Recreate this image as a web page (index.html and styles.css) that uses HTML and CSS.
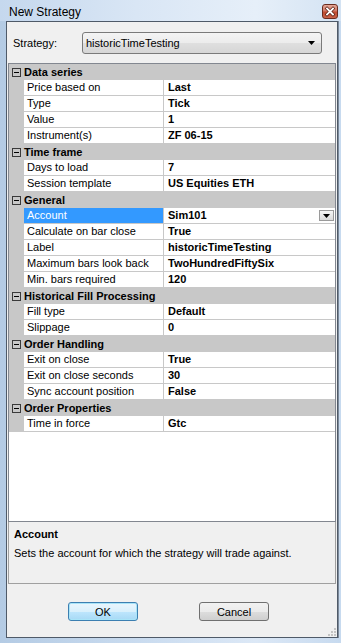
FILE: index.html
```html
<!DOCTYPE html>
<html>
<head>
<meta charset="utf-8">
<link rel="stylesheet" href="styles.css">
</head>
<body>
<div class="window">
  <div class="titlebar">
    <span class="title">New Strategy</span>
    <span class="close"><svg width="14" height="13" viewBox="0 0 14 13"><path d="M4 3.5 L10 9.5 M10 3.5 L4 9.5" stroke="#5a1e12" stroke-width="3.2" stroke-linecap="square"/><path d="M4 3.5 L10 9.5 M10 3.5 L4 9.5" stroke="#ffffff" stroke-width="1.8" stroke-linecap="square"/></svg></span>
  </div>
  <div class="client">
    <div class="strategy-row">
      <span class="strategy-label">Strategy:</span>
      <div class="combo">
        <span class="combo-text">historicTimeTesting</span>
        <svg class="combo-arrow" width="7" height="4" viewBox="0 0 7 4"><path d="M0 0 H7 L3.5 4 Z" fill="#000"/></svg>
      </div>
    </div>
    <div class="grid">
      <div class="cat"><span class="minus"></span><span class="cat-name">Data series</span></div>
      <div class="prop"><span class="name">Price based on</span><span class="val">Last</span></div>
      <div class="prop"><span class="name">Type</span><span class="val">Tick</span></div>
      <div class="prop"><span class="name">Value</span><span class="val">1</span></div>
      <div class="prop"><span class="name">Instrument(s)</span><span class="val">ZF 06-15</span></div>
      <div class="cat"><span class="minus"></span><span class="cat-name">Time frame</span></div>
      <div class="prop"><span class="name">Days to load</span><span class="val">7</span></div>
      <div class="prop"><span class="name">Session template</span><span class="val">US Equities ETH</span></div>
      <div class="cat"><span class="minus"></span><span class="cat-name">General</span></div>
      <div class="prop selected"><span class="name">Account</span><span class="val">Sim101<span class="dd"><svg width="7" height="4" viewBox="0 0 7 4"><path d="M0 0 H7 L3.5 4 Z" fill="#000"/></svg></span></span></div>
      <div class="prop"><span class="name">Calculate on bar close</span><span class="val">True</span></div>
      <div class="prop"><span class="name">Label</span><span class="val">historicTimeTesting</span></div>
      <div class="prop"><span class="name">Maximum bars look back</span><span class="val">TwoHundredFiftySix</span></div>
      <div class="prop"><span class="name">Min. bars required</span><span class="val">120</span></div>
      <div class="cat"><span class="minus"></span><span class="cat-name">Historical Fill Processing</span></div>
      <div class="prop"><span class="name">Fill type</span><span class="val">Default</span></div>
      <div class="prop"><span class="name">Slippage</span><span class="val">0</span></div>
      <div class="cat"><span class="minus"></span><span class="cat-name">Order Handling</span></div>
      <div class="prop"><span class="name">Exit on close</span><span class="val">True</span></div>
      <div class="prop"><span class="name">Exit on close seconds</span><span class="val">30</span></div>
      <div class="prop"><span class="name">Sync account position</span><span class="val">False</span></div>
      <div class="cat"><span class="minus"></span><span class="cat-name">Order Properties</span></div>
      <div class="prop"><span class="name">Time in force</span><span class="val">Gtc</span></div>
      <div class="filler"></div>
    </div>
    <div class="desc">
      <div class="desc-title">Account</div>
      <div class="desc-text">Sets the account for which the strategy will trade against.</div>
    </div>
    <div class="buttons">
      <button class="btn default">OK</button>
      <button class="btn">Cancel</button>
    </div>
    <svg class="grip" width="10" height="10" viewBox="0 0 10 10">
      <rect x="8" y="2" width="2" height="2" fill="#c4c4c4"/>
      <rect x="5" y="5" width="2" height="2" fill="#c4c4c4"/>
      <rect x="8" y="5" width="2" height="2" fill="#c4c4c4"/>
      <rect x="2" y="8" width="2" height="2" fill="#c4c4c4"/>
      <rect x="5" y="8" width="2" height="2" fill="#c4c4c4"/>
      <rect x="8" y="8" width="2" height="2" fill="#c4c4c4"/>
    </svg>
  </div>
</div>
</body>
</html>
```
FILE: styles.css
```css
* { box-sizing: border-box; }
html, body { margin: 0; padding: 0; }
body {
  width: 341px;
  height: 643px;
  overflow: hidden;
  font-family: "Liberation Sans", Arial, sans-serif;
  font-size: 11px;
  color: #000;
}
.window {
  width: 341px;
  height: 643px;
  display: flex;
  flex-direction: column;
  background: linear-gradient(90deg, #b4cbe4 0%, #c9dbef 40%, #dce8f6 75%, #c7daef 100%);
}
.titlebar {
  height: 21px;
  display: flex;
  justify-content: space-between;
  align-items: flex-start;
  padding: 0 3px 0 9px;
  background: linear-gradient(90deg, #c5d8ee 0%, #d9e6f5 40%, #e6eff9 75%, #d4e3f3 100%);
}
.title {
  font-family: "Liberation Sans", Arial, sans-serif;
  font-size: 12px;
  line-height: 15px;
  margin-top: 5px;
  color: #000;
}
.close {
  width: 16px;
  height: 15px;
  margin-top: 4px;
  border: 1px solid #6b2b1e;
  border-radius: 3px;
  background: linear-gradient(#e5a898 0%, #d27966 45%, #c04b30 55%, #c9634a 100%);
  display: flex;
  align-items: center;
  justify-content: center;
}
.client {
  position: relative;
  flex: 1;
  margin: 0 3px 5px 6px;
  border: 1px solid #4f5a68;
  box-shadow: 1px 0 0 #7d8a9a;
  background: #f0f0f0;
  display: flex;
  flex-direction: column;
}
.strategy-row {
  display: flex;
  align-items: center;
  height: 22px;
  margin-top: 10px;
  padding-left: 6px;
}
.strategy-label {
  width: 69px;
  color: #000;
}
.combo {
  width: 240px;
  height: 22px;
  border: 1px solid #7a7a7a;
  border-radius: 3px;
  background: linear-gradient(#f4f4f4 0%, #ececec 50%, #dfdfdf 51%, #d6d6d6 100%);
  display: flex;
  align-items: center;
  justify-content: space-between;
  padding: 0 6px 0 3px;
}
.combo-text { color: #000; }
.combo-arrow { display: block; }
.grid {
  margin: 9px 1px 0 1px;
  height: 459px;
  border: 1px solid #828790;
  background: #fff;
  display: flex;
  flex-direction: column;
}
.cat {
  height: 16px;
  flex: none;
  background: #c8c8c8;
  display: flex;
  align-items: center;
}
.minus {
  position: relative;
  width: 9px;
  height: 9px;
  margin: 0 3px 0 3px;
  border: 1px solid #3a3a3a;
}
.minus::after {
  content: "";
  position: absolute;
  left: 1px;
  top: 3px;
  width: 5px;
  height: 1px;
  background: #000;
}
.cat-name {
  font-weight: bold;
  line-height: 15px;
}
.prop {
  height: 16px;
  flex: none;
  background: #c8c8c8;
  display: flex;
  padding-left: 15px;
  padding-bottom: 1px;
}
.name {
  width: 139px;
  height: 15px;
  line-height: 15px;
  background: #fff;
  padding-left: 3px;
  white-space: nowrap;
  overflow: hidden;
}
.val {
  flex: 1;
  height: 15px;
  line-height: 15px;
  margin-left: 1px;
  background: #fff;
  font-weight: bold;
  padding-left: 4px;
  display: flex;
  justify-content: space-between;
  align-items: center;
  white-space: nowrap;
}
.selected .name {
  background: #3399ff;
  color: #fff;
}
.dd {
  width: 15px;
  height: 11px;
  margin-right: 1px;
  border: 1px solid #9a9a9a;
  background: linear-gradient(#f6f6f6, #dadada);
  display: flex;
  align-items: center;
  justify-content: center;
}
.dd svg { display: block; }
.filler {
  flex: 1;
  background: #fff;
}
.desc {
  margin: 0 1px;
  height: 62px;
  border: 1px solid #a0a0a0;
  border-top: none;
  background: #f0f0f0;
  padding: 5px 0 0 5px;
}
.desc-title {
  font-weight: bold;
  line-height: 14px;
}
.desc-text {
  line-height: 14px;
  margin-top: 5px;
}
.buttons {
  display: flex;
  margin-top: 18px;
  padding-left: 61px;
  gap: 61px;
}
.btn {
  width: 70px;
  height: 19px;
  font-family: "Liberation Sans", Arial, sans-serif;
  font-size: 11px;
  color: #000;
  border: 1px solid #707070;
  border-radius: 3px;
  background: linear-gradient(#f2f2f2 0%, #ebebeb 50%, #dddddd 51%, #cfcfcf 100%);
  padding: 0;
}
.btn.default {
  border-color: #3c7fb1;
  box-shadow: inset 0 0 0 1px #a8e4f8;
  background: linear-gradient(#eaf6fd 0%, #d9f0fc 50%, #bee6fd 51%, #a7d9f5 100%);
}
.grip {
  position: absolute;
  right: 1px;
  bottom: 1px;
}
```
